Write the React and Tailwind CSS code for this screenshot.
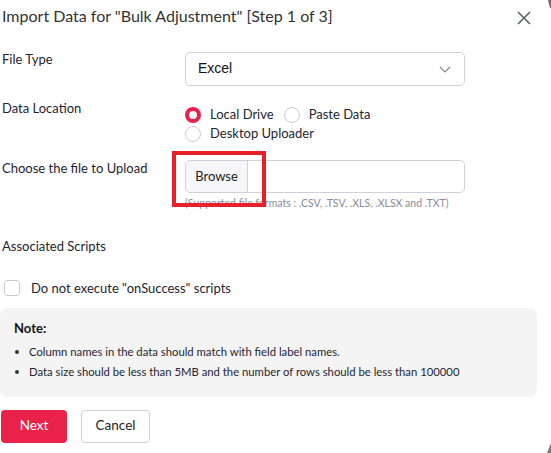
import React from 'react';

// Radio option with red ring when selected
function Radio({ checked, label }) {
  return (
    <label className="flex items-center gap-[9px]">
      {checked ? (
        <span className="w-[16px] h-[16px] rounded-full border-[4.5px] border-[#e8204a] bg-white shrink-0" />
      ) : (
        <span className="w-[16px] h-[16px] rounded-full border border-[#cbcbd8] bg-white shrink-0" />
      )}
      <span>{label}</span>
    </label>
  );
}

export default function App() {
  return (
    <div className="w-[551px] h-[453px] bg-white overflow-hidden text-[#1e2433] text-[13px] leading-[19.5px] font-['Lato',sans-serif] relative">
      {/* Header */}
      <div className="flex items-center justify-between h-[30px] pl-[2px] pr-[20px]">
        <h1 className="text-[16px] text-[#333] leading-none pt-[1px]">
          Import Data for "Bulk Adjustment" [Step 1 of 3]
        </h1>
        <svg width="14" height="14" viewBox="0 0 14 14" className="mt-[6px]">
          <path d="M1 1L13 13M13 1L1 13" stroke="#5f6368" strokeWidth="1.6" />
        </svg>
      </div>

      {/* Form rows */}
      <div className="pl-[2px]">
        <div className="flex mt-[19px]">
          <div className="w-[183px] pt-[1px]">File Type</div>
          <div className="w-[280px] h-[34px] border border-[#d0d0dc] rounded-[5px] flex items-center justify-between pl-[12px] pr-[13px] mt-[3px]">
            <span className="font-['Liberation_Sans',sans-serif] text-[14px] text-[#111]">Excel</span>
            <svg width="12" height="7" viewBox="0 0 12 7">
              <path d="M1 1l5 5 5-5" fill="none" stroke="#888" strokeWidth="1.2" />
            </svg>
          </div>
        </div>

        <div className="flex mt-[12px]">
          <div className="w-[183px] pt-[1px]">Data Location</div>
          <div className="flex flex-col leading-[19px] mt-[7px]">
            <div className="flex items-center gap-[10px]">
              <Radio checked label="Local Drive" />
              <Radio label="Paste Data" />
            </div>
            <Radio label="Desktop Uploader" />
          </div>
        </div>

        <div className="flex mt-[14px]">
          <div className="w-[183px] pt-[2px]">Choose the file to Upload</div>
          <div className="flex flex-col mt-[3px]">
            <div className="relative w-[280px] h-[33px] border border-[#d0d0dc] rounded-[5px] flex">
              <div className="w-[62px] h-full bg-[#f7f7f9] border-r border-[#d0d0dc] rounded-l-[5px] flex items-center justify-center text-[13px] text-[#222]">
                Browse
              </div>
              {/* Red highlight box */}
              <div className="absolute -left-[14px] -top-[10px] w-[94px] h-[56px] border-[4px] border-[#e8202a]" />
            </div>
            <div className="text-[10.5px] leading-[16px] text-[#8a8a9a] mt-[2px]">
              (Supported file formats : .CSV, .TSV, .XLS, .XLSX and .TXT)
            </div>
          </div>
        </div>

        <div className="mt-[26px]">Associated Scripts</div>

        <label className="flex items-center gap-[11px] mt-[21px] pl-[2px] leading-[21px]">
          <span className="w-[16px] h-[16px] rounded-[3px] border border-[#c9c9d6] bg-white" />
          <span>Do not execute "onSuccess" scripts</span>
        </label>
      </div>

      {/* Note */}
      <div className="w-[537px] h-[89px] mt-[9px] bg-[#f4f4f4] rounded-[8px] pl-[14px] pt-[11px]">
        <div className="font-bold text-[13px] text-[#111]">Note:</div>
        <ul className="mt-[5px] flex flex-col gap-[2px] text-[11.3px] leading-[18px]">
          <li className="flex items-center gap-[10px]">
            <span className="w-[4px] h-[4px] rounded-full bg-[#333] ml-[1px]" />
            Column names in the data should match with field label names.
          </li>
          <li className="flex items-center gap-[10px]">
            <span className="w-[4px] h-[4px] rounded-full bg-[#333] ml-[1px]" />
            Data size should be less than 5MB and the number of rows should be less than 100000
          </li>
        </ul>
      </div>

      {/* Actions */}
      <div className="flex gap-[14px] mt-[13px] pl-[1px]">
        <button className="w-[66px] h-[33px] rounded-[4px] bg-[#ea2149] text-white text-[13.5px]">Next</button>
        <button className="w-[69px] h-[33px] rounded-[4px] bg-white border border-[#cfcfe0] text-[#222] text-[13.5px]">Cancel</button>
      </div>

      {/* Window edge slivers */}
      <svg className="absolute right-0 top-0" width="4" height="8" viewBox="0 0 4 8">
        <polygon points="1,0 4,0 4,8 3,8" fill="#6b6b6b" />
      </svg>
      <svg className="absolute right-0 bottom-0" width="4" height="10" viewBox="0 0 4 10">
        <polygon points="4,0 4,10 0,10" fill="#7a7a7a" />
      </svg>
    </div>
  );
}
